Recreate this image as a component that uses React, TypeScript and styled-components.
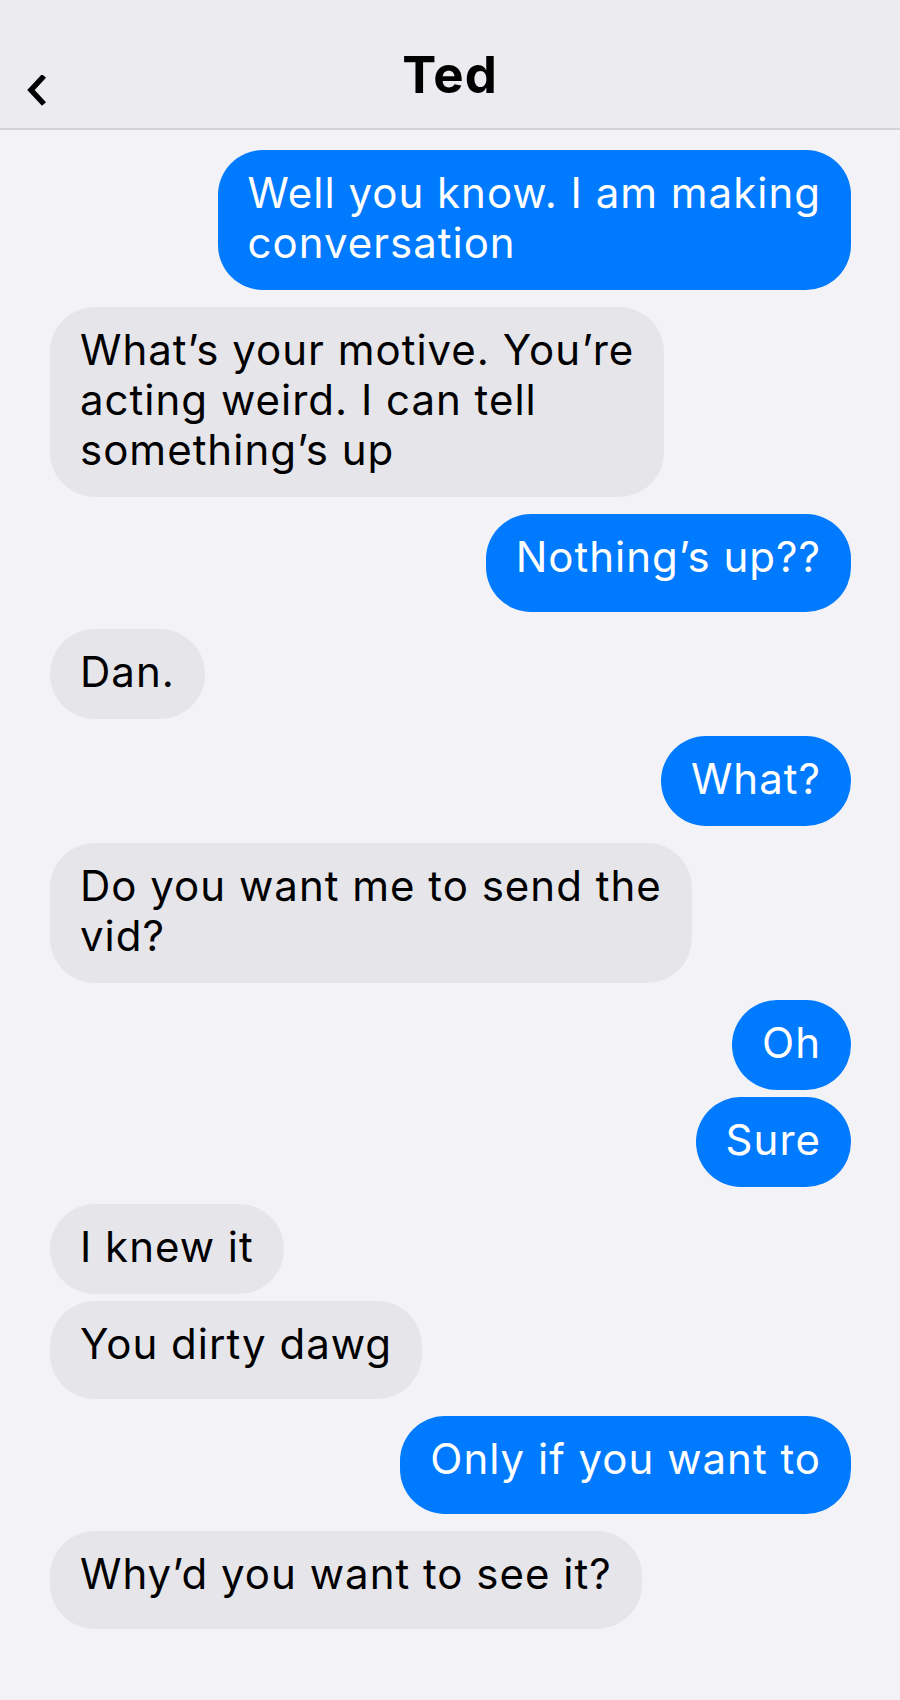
import styled, { createGlobalStyle } from "styled-components";

type Message = {
  from: "me" | "them";
  lines: string[];
};

const messages: Message[] = [
  { from: "me", lines: ["Well you know. I am making", "conversation"] },
  { from: "them", lines: ["What’s your motive. You’re", "acting weird. I can tell", "something’s up"] },
  { from: "me", lines: ["Nothing’s up??"] },
  { from: "them", lines: ["Dan."] },
  { from: "me", lines: ["What?"] },
  { from: "them", lines: ["Do you want me to send the", "vid?"] },
  { from: "me", lines: ["Oh"] },
  { from: "me", lines: ["Sure"] },
  { from: "them", lines: ["I knew it"] },
  { from: "them", lines: ["You dirty dawg"] },
  { from: "me", lines: ["Only if you want to"] },
  { from: "them", lines: ["Why’d you want to see it?"] },
];

const GlobalStyle = createGlobalStyle`
  html, body {
    margin: 0;
    padding: 0;
    background: #f2f2f7;
  }
  body {
    font-family: Inter, "Noto Sans", sans-serif;
    -webkit-font-smoothing: antialiased;
  }
`;

const App = () => {
  return (
    <Screen>
      <GlobalStyle />
      <Header>
        <BackButton aria-label="Back">
          <svg width="24" height="32" viewBox="0 0 24 32">
            <polyline points="17,1 4,15 17,29" fill="none" stroke="#000" strokeWidth="5.5" strokeLinejoin="miter" />
          </svg>
        </BackButton>
        <Title>Ted</Title>
        <span />
      </Header>
      <Thread>
        {messages.map((m, i) => {
          const grouped = i > 0 && messages[i - 1].from === m.from;
          // single lines that dip below the baseline get a deeper bubble
          const deep = m.lines.length === 1 && /[gjpqy]/.test(m.lines[0]);
          return (
            <Bubble key={i} $mine={m.from === "me"} $grouped={grouped} $deep={deep}>
              {m.lines.map((line, j) => <Line key={j}>{line}</Line>)}
            </Bubble>
          );
        })}
      </Thread>
    </Screen>
  );
};

export default App;

const Screen = styled.div`
  width: 900px;
  min-height: 1700px;
  background: #f2f2f7;
  display: flex;
  flex-direction: column;
`;

const Header = styled.header`
  box-sizing: content-box;
  height: 83px;
  padding-top: 45px;
  background: #ebebf0;
  border-bottom: 2px solid #d3d3d8;
  display: grid;
  grid-template-columns: 1fr auto 1fr;
  align-items: start;
`;

const BackButton = styled.button`
  justify-self: start;
  margin: 30px 0 0 27px;
  padding: 0;
  border: none;
  background: none;
  display: flex;
`;

const Title = styled.h1`
  margin: 0;
  font-size: 51px;
  line-height: 60px;
  font-weight: 700;
  letter-spacing: 1px;
  color: #000;
`;

const Thread = styled.main`
  display: flex;
  flex-direction: column;
  padding: 20px 49px 40px 50px;
`;

const Bubble = styled.div<{ $mine: boolean; $grouped: boolean; $deep: boolean }>`
  align-self: ${(p) => (p.$mine ? "flex-end" : "flex-start")};
  margin-top: ${(p) => (p.$grouped ? "7px" : "17px")};
  &:first-child {
    margin-top: 0;
  }
  padding: 18px 30px ${(p) => (p.$deep ? "30px" : "22px")};
  border-radius: 45px;
  background: ${(p) => (p.$mine ? "#007aff" : "#e5e5ea")};
  color: ${(p) => (p.$mine ? "#fff" : "#000")};
  font-size: 42px;
  line-height: 50px;
  letter-spacing: 1px;
`;

const Line = styled.div`
  white-space: nowrap;
`;
